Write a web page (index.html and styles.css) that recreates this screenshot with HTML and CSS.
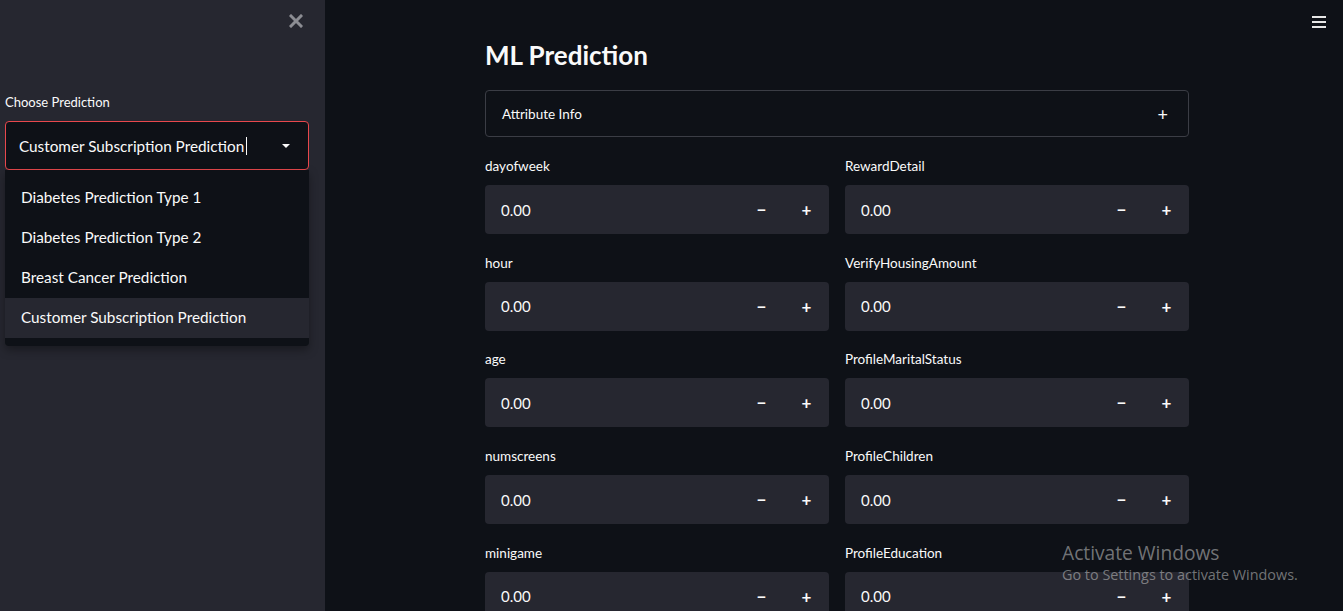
FILE: index.html
```html
<!DOCTYPE html>
<html>
<head>
<meta charset="utf-8">
<link rel="stylesheet" href="styles.css">
</head>
<body>
<div class="app">
  <aside class="sidebar">
    <div class="side-top">
      <svg class="close" width="14" height="14" viewBox="0 0 14 14"><path d="M2 2 L12 12 M12 2 L2 12" stroke="#8c8d93" stroke-width="3" stroke-linecap="square"/></svg>
    </div>
    <div class="side-label">Choose Prediction</div>
    <div class="select-wrap">
      <div class="select">
        <span class="select-value">Customer Subscription Prediction</span><span class="cursor"></span>
        <svg class="arrow" width="10" height="6" viewBox="0 0 10 6"><path d="M1 1 L5 5 L9 1 Z" fill="#fafafa"/></svg>
      </div>
      <ul class="menu">
        <li>Diabetes Prediction Type 1</li>
        <li>Diabetes Prediction Type 2</li>
        <li>Breast Cancer Prediction</li>
        <li class="active">Customer Subscription Prediction</li>
      </ul>
    </div>
  </aside>
  <main class="main">
    <svg class="hamburger" width="14" height="12" viewBox="0 0 14 12"><rect x="0" y="0" width="14" height="2" fill="#e6e6e6"/><rect x="0" y="5" width="14" height="2" fill="#e6e6e6"/><rect x="0" y="10" width="14" height="2" fill="#e6e6e6"/></svg>
    <div class="content">
      <h1 class="title">ML Prediction</h1>
      <div class="expander">
        <span>Attribute Info</span>
        <span class="exp-plus">+</span>
      </div>
      <div class="grid">
        <div class="field"><div class="label">dayofweek</div><div class="num"><div class="num-val">0.00</div><div class="step">−</div><div class="step">+</div></div></div>
        <div class="field"><div class="label">RewardDetail</div><div class="num"><div class="num-val">0.00</div><div class="step">−</div><div class="step">+</div></div></div>
        <div class="field"><div class="label">hour</div><div class="num"><div class="num-val">0.00</div><div class="step">−</div><div class="step">+</div></div></div>
        <div class="field"><div class="label">VerifyHousingAmount</div><div class="num"><div class="num-val">0.00</div><div class="step">−</div><div class="step">+</div></div></div>
        <div class="field"><div class="label">age</div><div class="num"><div class="num-val">0.00</div><div class="step">−</div><div class="step">+</div></div></div>
        <div class="field"><div class="label">ProfileMaritalStatus</div><div class="num"><div class="num-val">0.00</div><div class="step">−</div><div class="step">+</div></div></div>
        <div class="field"><div class="label">numscreens</div><div class="num"><div class="num-val">0.00</div><div class="step">−</div><div class="step">+</div></div></div>
        <div class="field"><div class="label">ProfileChildren</div><div class="num"><div class="num-val">0.00</div><div class="step">−</div><div class="step">+</div></div></div>
        <div class="field"><div class="label">minigame</div><div class="num"><div class="num-val">0.00</div><div class="step">−</div><div class="step">+</div></div></div>
        <div class="field"><div class="label">ProfileEducation</div><div class="num"><div class="num-val">0.00</div><div class="step">−</div><div class="step">+</div></div></div>
      </div>
    </div>
    <div class="watermark">
      <div class="wm-title">Activate Windows</div>
      <div class="wm-sub">Go to Settings to activate Windows.</div>
    </div>
  </main>
</div>
</body>
</html>
```
FILE: styles.css
```css
* { box-sizing: border-box; }
html, body { margin: 0; padding: 0; height: 100%; overflow: hidden; }
body {
  font-family: "Lato", "Noto Sans", sans-serif;
  color: #fafafa;
  background: #0e1117;
}
.app { display: flex; height: 611px; }
.sidebar {
  width: 325px;
  flex-shrink: 0;
  background: #262730;
  padding: 0 16px 0 5px;
  position: relative;
}
.side-top { height: 92px; display: flex; justify-content: flex-end; padding-top: 14px; }
.close { margin-right: 6px; }
.side-label { font-size: 13px; line-height: 20px; height: 29px; }
.select-wrap { position: relative; width: 304px; }
.select {
  height: 49px;
  border: 1.5px solid #e8484d;
  border-radius: 4px;
  background: #0e1117;
  display: flex;
  align-items: center;
  padding-left: 13px;
  font-size: 15.3px;
  position: relative;
}
.cursor { display: inline-block; width: 1px; height: 18px; background: #fafafa; margin-left: 2px; }
.arrow { position: absolute; right: 17px; top: 21px; }
.menu {
  position: absolute;
  left: 0; top: 49px;
  width: 304px;
  margin: 0; padding: 8px 0;
  list-style: none;
  background: #0e1117;
  border-radius: 0 0 4px 4px;
  box-shadow: 0 4px 10px rgba(0,0,0,0.35);
}
.menu li { height: 40px; line-height: 38px; padding-left: 16px; font-size: 15.3px; }
.menu li.active { background: #262730; }
.main { flex: 1; position: relative; }
.hamburger { position: absolute; right: 17px; top: 16px; }
.content { width: 704px; margin: 0 0 0 160px; padding-top: 35px; }
.title { margin: 0; font-size: 26px; font-weight: 700; line-height: 40px; height: 55px; }
.expander {
  height: 47px;
  border: 1px solid #3b3d45;
  border-radius: 4px;
  display: flex;
  align-items: center;
  justify-content: space-between;
  padding: 0 20px 0 16px;
  font-size: 13.5px;
}
.exp-plus { font-size: 18px; }
.grid { display: grid; grid-template-columns: 344px 344px; column-gap: 16px; padding-top: 20px; }
.field { height: 96.7px; }
.label { font-size: 13.5px; line-height: 18px; height: 28px; }
.num { display: flex; height: 49px; background: #262730; border-radius: 4px; align-items: center; }
.num-val { flex: 1; padding-left: 16px; font-size: 15px; }
.step { width: 45px; text-align: center; font-size: 17px; font-weight: 700; }
.watermark { position: absolute; left: 737px; top: 541px; color: rgba(200,200,200,0.55); font-family: "Open Sans", "Noto Sans", sans-serif; }
.wm-title { font-size: 19.2px; line-height: 24px; }
.wm-sub { font-size: 14.4px; line-height: 20px; }
```
